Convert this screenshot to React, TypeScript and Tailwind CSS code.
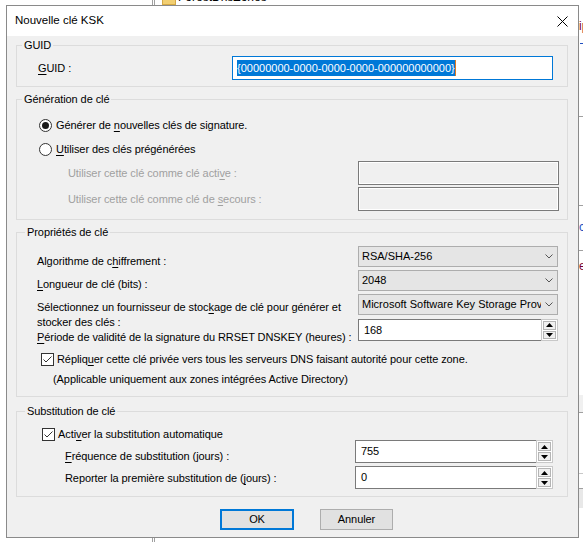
import React from "react";

function U({ c }: { c: string }) {
  return <span className="underline decoration-1 underline-offset-[2px]">{c}</span>;
}

function Radio({ checked }: { checked?: boolean }) {
  return (
    <span className="w-[13px] h-[13px] rounded-full border border-[#333333] bg-white flex items-center justify-center shrink-0">
      {checked && <span className="w-[7px] h-[7px] rounded-full bg-[#1a1a1a]" />}
    </span>
  );
}

function Check() {
  return (
    <span className="w-[13px] h-[13px] border border-[#333333] bg-white flex items-center justify-center shrink-0">
      <svg width="11" height="11" viewBox="0 0 11 11">
        <path d="M1.5 5.5 L4 8 L9.5 2.5" fill="none" stroke="#333333" strokeWidth="1" />
      </svg>
    </span>
  );
}

function Select({ text }: { text: string }) {
  return (
    <div className="w-[200px] h-[21px] border border-[#adadad] bg-[#e5e5e5] flex items-center pl-[3px] pr-[4px] tracking-normal">
      <span className="flex-1 overflow-hidden whitespace-nowrap">{text}</span>
      <svg width="8" height="5" viewBox="0 0 8 5" className="ml-[4px] shrink-0">
        <path d="M0.5 0.5 L4 4 L7.5 0.5" fill="none" stroke="#555555" strokeWidth="1" />
      </svg>
    </div>
  );
}

function Arrow({ up }: { up?: boolean }) {
  return (
    <svg width="7" height="4" viewBox="0 0 7 4">
      {up ? <path d="M0 4 L3.5 0 L7 4 Z" fill="#000" /> : <path d="M0 0 L3.5 4 L7 0 Z" fill="#000" />}
    </svg>
  );
}

function Spin({ value, className }: { value: string; className: string }) {
  return (
    <div className={"flex " + className}>
      <div className="flex-1 border-y border-l border-[#7a7a7a] bg-white pl-[5px] flex items-center">{value}</div>
      <div className="w-[17px] border border-[#c8c8c8] bg-white flex flex-col p-[1px] gap-[1px]">
        <div className="flex-1 border border-[#b4b4b4] bg-[#f0f0f0] flex items-center justify-center">
          <Arrow up />
        </div>
        <div className="flex-1 border border-[#b4b4b4] bg-[#f0f0f0] flex items-center justify-center">
          <Arrow />
        </div>
      </div>
    </div>
  );
}

function Background() {
  return (
    <>
      <div className="absolute left-[152px] top-0 w-[1px] h-[542px] bg-[#a0a0a0]" />
      <div className="absolute left-[154px] top-0 w-[1px] h-[542px] bg-[#a0a0a0]" />
      <div className="absolute left-[162px] top-0 w-[14px] h-[5px] bg-[#f2cf72] border-x border-b border-[#d6a945]" />
      <span className="absolute left-[178px] top-[-10px] text-[12px] leading-[14px] text-black whitespace-nowrap">ForestDnsZones</span>
      <span className="absolute left-[579px] top-[17px] text-[12px] text-[#7a0030] whitespace-nowrap">ip</span>
      <div className="absolute left-[580px] top-[43px] w-[3px] h-[1px] bg-[#1f4fc0]" />
      <div className="absolute left-[579px] top-[116px] w-[4px] h-[1px] bg-[#a0a0a0]" />
      <div className="absolute left-[579px] top-[205px] w-[4px] h-[1px] bg-[#a0a0a0]" />
      <span className="absolute left-[579px] top-[218px] text-[12px] text-[#1f4fc0] whitespace-nowrap">c</span>
      <div className="absolute left-[579px] top-[250px] w-[4px] h-[1px] bg-[#a0a0a0]" />
      <span className="absolute left-[579px] top-[257px] text-[12px] text-[#7a0030] whitespace-nowrap">e</span>
      <div className="absolute left-[579px] top-[395px] w-[4px] h-[17px] bg-[#f0f0f0]" />
      <div className="absolute left-[579px] top-[412px] w-[4px] h-[1px] bg-[#a0a0a0]" />
      <div className="absolute left-[579px] top-[473px] w-[4px] h-[1px] bg-[#c8c8c8]" />
      <div className="absolute left-[579px] top-[488px] w-[4px] h-[20px] bg-[#e8e8e8]" />
      <div className="absolute left-[579px] top-[488px] w-[4px] h-[1px] bg-[#a0a0a0]" />
    </>
  );
}

export default function App() {
  return (
    <div className="relative w-[583px] h-[542px] overflow-hidden bg-white text-black font-['Liberation_Sans',Arial,sans-serif] text-[11px]">
      <Background />
      <div className="absolute left-[6px] top-[5px] w-[573px] h-[533px] border border-[#8a8a8a] bg-[#f0f0f0] flex flex-col">
        {/* Title bar */}
        <div className="h-[30px] shrink-0 bg-white flex items-center justify-between pl-[8px] pr-[10px]">
          <span className="text-[11.5px]">Nouvelle clé KSK</span>
          <svg width="11" height="11" viewBox="0 0 11 11">
            <path d="M0.5 0.5 L10.5 10.5 M10.5 0.5 L0.5 10.5" stroke="#000" strokeWidth="1" />
          </svg>
        </div>

        <div className="flex flex-col pl-[9px] pr-[10px] tracking-[-0.08px]">
          {/* GUID */}
          <fieldset className="mt-[2px] border border-[#dcdcdc]">
            <legend className="ml-[5px] px-[2px] leading-[15px]">GUID</legend>
            <div className="pt-[3px] pb-[6px] flex items-center">
              <span className="pl-[21px] leading-[15px]">
                <U c="G" />UID :
              </span>
              <div className="ml-auto mr-[14px] w-[321px] h-[24px] border border-[#0078d7] bg-white flex items-center pl-[4px]">
                <span className="bg-[#0078d7] text-white leading-[16px] whitespace-nowrap tracking-normal">
                  {"{00000000-0000-0000-0000-000000000000}"}
                </span>
                <span className="w-[1px] h-[16px] bg-[#e07a20]" />
              </div>
            </div>
          </fieldset>

          {/* Génération de clé */}
          <fieldset className="mt-[5px] border border-[#dcdcdc]">
            <legend className="ml-[5px] px-[2px] leading-[15px]">Génération de clé</legend>
            <div className="pt-[6px] pb-[8px] flex flex-col">
              <div className="h-[24px] flex items-center pl-[22px] gap-[4px]">
                <Radio checked />
                <span className="leading-[15px]">
                  Générer de <U c="n" />ouvelles clés de signature.
                </span>
              </div>
              <div className="h-[24px] flex items-center pl-[22px] gap-[4px]">
                <Radio />
                <span className="leading-[15px]">
                  <U c="U" />tiliser des clés prégénérées
                </span>
              </div>
              <div className="h-[24px] flex items-center">
                <span className="pl-[51px] leading-[15px] text-[#a0a0a0]">
                  Utiliser cette clé comme clé acti<U c="v" />e :
                </span>
                <div className="ml-auto mr-[8px] w-[201px] h-[24px] border border-[#7a7a7a] bg-[#f0f0f0] shadow-[inset_0_0_0_1px_#ffffff]" />
              </div>
              <div className="mt-[2px] h-[24px] flex items-center">
                <span className="pl-[51px] leading-[15px] text-[#a0a0a0]">
                  Utiliser cette clé comme clé de <U c="s" />ecours :
                </span>
                <div className="ml-auto mr-[8px] w-[201px] h-[24px] border border-[#7a7a7a] bg-[#f0f0f0] shadow-[inset_0_0_0_1px_#ffffff]" />
              </div>
            </div>
          </fieldset>

          {/* Propriétés de clé */}
          <fieldset className="mt-[5px] border border-[#dcdcdc]">
            <legend className="ml-[8px] px-[2px] leading-[15px]">Propriétés de clé</legend>
            <div className="pb-[9px] flex flex-col">
              <div className="flex">
                <div className="flex flex-col pl-[20px] pt-[14px] leading-[15px]">
                  <span>
                    Algorithme de c<U c="h" />iffrement :
                  </span>
                  <span className="mt-[8px]">
                    <U c="L" />ongueur de clé (bits) :
                  </span>
                  <span className="mt-[8px]">
                    Sélectionnez un fournisseur de stoc<U c="k" />age de clé pour générer et
                    <br />
                    stocker des clés :
                  </span>
                  <span>
                    <U c="P" />ériode de validité de la signature du RRSET DNSKEY (heures) :
                  </span>
                </div>
                <div className="ml-auto mr-[9px] flex flex-col pt-[6px]">
                  <Select text="RSA/SHA-256" />
                  <div className="mt-[3px]">
                    <Select text="2048" />
                  </div>
                  <div className="mt-[3px]">
                    <Select text="Microsoft Software Key Storage Provider" />
                  </div>
                  <div className="mt-[4px]">
                    <Spin value="168" className="w-[200px] h-[22px]" />
                  </div>
                </div>
              </div>
              <div className="mt-[6px] h-[16px] flex items-center pl-[24px] gap-[3px]">
                <Check />
                <span className="leading-[15px]">
                  Répliq<U c="u" />er cette clé privée vers tous les serveurs DNS faisant autorité pour cette zone.
                </span>
              </div>
              <span className="mt-[5px] pl-[36px] leading-[15px]">
                (Applicable uniquement aux zones intégrées Active Directory)
              </span>
            </div>
          </fieldset>

          {/* Substitution de clé */}
          <fieldset className="mt-[7px] border border-[#dcdcdc]">
            <legend className="ml-[8px] px-[2px] leading-[15px]">Substitution de clé</legend>
            <div className="pb-[7px] flex">
              <div className="flex flex-col pt-[7px]">
                <div className="h-[16px] flex items-center pl-[25px] gap-[3px]">
                  <Check />
                  <span className="leading-[15px]">
                    Acti<U c="v" />er la substitution automatique
                  </span>
                </div>
                <span className="mt-[7px] pl-[48px] leading-[15px]">
                  <U c="F" />réquence de substitution (jours) :
                </span>
                <span className="mt-[7px] pl-[48px] leading-[15px]">
                  Reporter la première substitution de (<U c="j" />ours) :
                </span>
              </div>
              <div className="ml-auto mr-[14px] flex flex-col pt-[21px]">
                <Spin value="755" className="w-[198px] h-[23px]" />
                <div className="mt-[3px]">
                  <Spin value="0" className="w-[198px] h-[23px]" />
                </div>
              </div>
            </div>
          </fieldset>

          {/* Buttons */}
          <div className="mt-[12px] flex pl-[204px]">
            <button className="w-[74px] h-[21px] border-2 border-[#0078d7] bg-[#e1e1e1] flex items-center justify-center">
              OK
            </button>
            <button className="ml-[26px] w-[73px] h-[21px] border border-[#adadad] bg-[#e1e1e1] flex items-center justify-center">
              Annuler
            </button>
          </div>
        </div>
      </div>
    </div>
  );
}
